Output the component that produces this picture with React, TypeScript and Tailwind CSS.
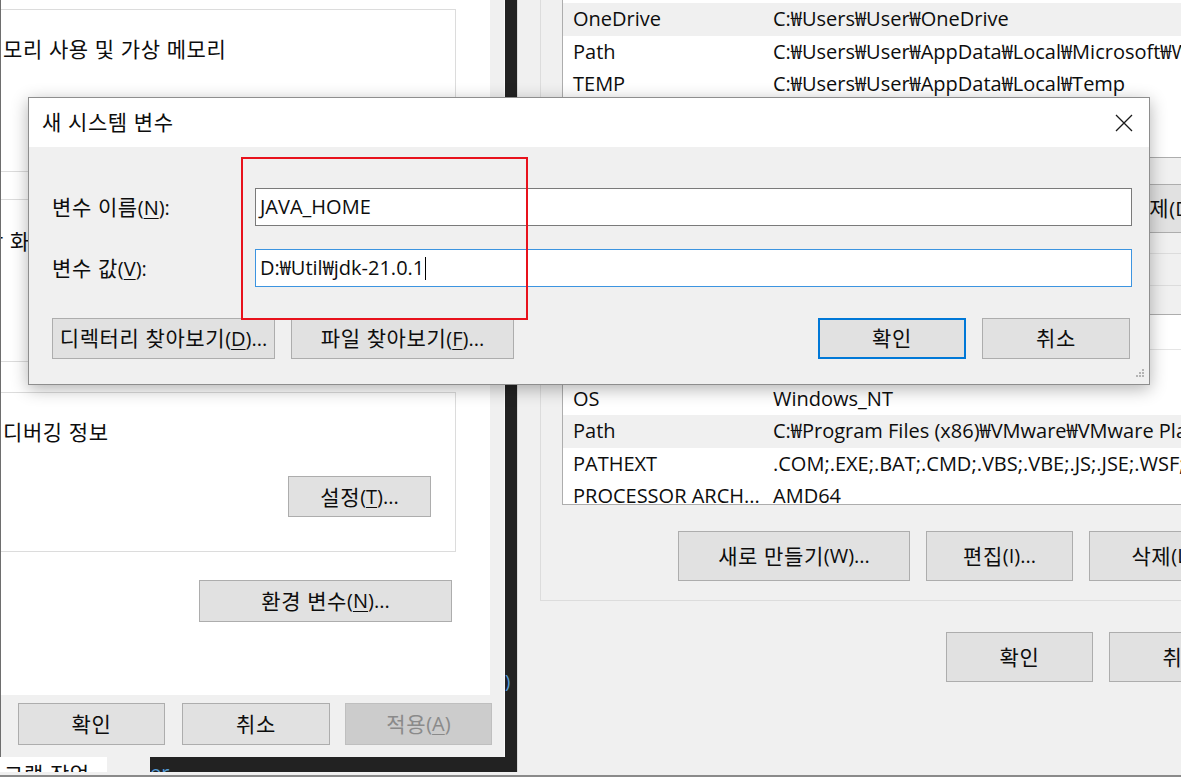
import type { ReactNode } from 'react'

// Korean runs: Noto CJK hangul at this size and tracking matches the advance of the screenshot's glyphs
const K = ({ children }: { children: ReactNode }) => (
  <span className="text-[21px] tracking-[0.6px]">{children}</span>
)

const U = ({ children }: { children: ReactNode }) => (
  <u className="underline decoration-1 underline-offset-[3px]">{children}</u>
)

type BtnProps = {
  className?: string
  children: ReactNode
  primary?: boolean
  disabled?: boolean
}

function Btn({ className = '', children, primary = false, disabled = false }: BtnProps) {
  const tone = primary
    ? 'border-2 border-[#0078d7] bg-[#e1e1e1]'
    : disabled
      ? 'border border-[#bfbfbf] bg-[#cccccc] text-[#8a8a8a]'
      : 'border border-[#adadad] bg-[#e1e1e1]'
  return (
    <div className={`flex shrink-0 items-center justify-center whitespace-nowrap ${tone} ${className}`}>
      {children}
    </div>
  )
}

type Row = { name: string; value: string; hot?: boolean }

const USER_VARS: Row[] = [
  { name: 'OneDrive', value: 'C:₩Users₩User₩OneDrive', hot: true },
  { name: 'Path', value: 'C:₩Users₩User₩AppData₩Local₩Microsoft₩WindowsApps;' },
  { name: 'TEMP', value: 'C:₩Users₩User₩AppData₩Local₩Temp' },
  { name: 'TMP', value: 'C:₩Users₩User₩AppData₩Local₩Temp' },
]

const SYSTEM_VARS: Row[] = [
  { name: 'NUMBER_OF_PROCESSORS', value: '8' },
  { name: 'OS', value: 'Windows_NT' },
  { name: 'Path', value: 'C:₩Program Files (x86)₩VMware₩VMware Player₩bin₩;', hot: true },
  { name: 'PATHEXT', value: '.COM;.EXE;.BAT;.CMD;.VBS;.VBE;.JS;.JSE;.WSF;...' },
  { name: 'PROCESSOR ARCH...', value: 'AMD64' },
]

function VarRow({ row }: { row: Row }) {
  return (
    <div className={`flex h-[32.5px] shrink-0 items-center whitespace-nowrap ${row.hot ? 'bg-[#f0f0f0]' : ''}`}>
      <div className="w-[210px] shrink-0 pl-[10px]">{row.name}</div>
      <div>{row.value}</div>
    </div>
  )
}

function Grip() {
  return (
    <svg width="12" height="12" viewBox="0 0 12 12" className="absolute bottom-[4px] right-[4px]">
      {[
        [9, 1],
        [6, 4],
        [9, 4],
        [3, 7],
        [6, 7],
        [9, 7],
      ].map(([x, y]) => (
        <rect key={`${x}-${y}`} x={x} y={y} width="2" height="2" fill="#b4b4b4" />
      ))}
    </svg>
  )
}

function NewVariableDialog() {
  return (
    <div className="absolute left-[28px] top-[97px] flex h-[288px] w-[1122px] flex-col border border-[#8e8e8e] bg-[#f0f0f0] shadow-[0_4px_16px_rgba(0,0,0,0.3)]">
      <div className="flex h-[49px] shrink-0 items-center justify-between bg-white pl-[13px] pr-[16px]">
        <K>새 시스템 변수</K>
        <svg width="18" height="18" viewBox="0 0 18 18">
          <path d="M1 1 L17 17 M17 1 L1 17" stroke="#1a1a1a" strokeWidth="1.3" />
        </svg>
      </div>
      <div className="relative flex flex-1 flex-col pl-[23px] pr-[17px] pt-[41px]">
        <div className="flex h-[38px] items-center">
          <div className="w-[203px] shrink-0">
            <K>변수 이름</K>(<U>N</U>):
          </div>
          <div className="flex h-full flex-1 items-center border border-[#7a7a7a] bg-white pl-[4px]">JAVA_HOME</div>
        </div>
        <div className="mt-[23px] flex h-[38px] items-center">
          <div className="w-[203px] shrink-0">
            <K>변수 값</K>(<U>V</U>):
          </div>
          <div className="flex h-full flex-1 items-center border border-[#3c94e0] bg-white pl-[4px]">
            D:₩Util₩jdk-21.0.1
            <span className="ml-[1px] h-[23px] w-px bg-black" />
          </div>
        </div>
        <div className="mt-[31px] flex h-[41px] pr-[2px]">
          <Btn className="w-[223px]">
            <K>디렉터리 찾아보기</K>(<U>D</U>)...
          </Btn>
          <Btn className="ml-[16px] w-[223px]">
            <K>파일 찾아보기</K>(<U>F</U>)...
          </Btn>
          <Btn primary className="ml-auto w-[148px]">
            <K>확인</K>
          </Btn>
          <Btn className="ml-[16px] w-[148px]">
            <K>취소</K>
          </Btn>
        </div>
        <Grip />
      </div>
    </div>
  )
}

function SystemPropertiesWindow() {
  return (
    <div className="flex w-[505px] shrink-0 flex-col">
      <div className="flex h-[757px] shrink-0 flex-col border-l border-r border-l-[#6e6e6e] border-r-[#fafafa] bg-[#f0f0f0]">
        <div className="flex h-[695px] w-[489px] shrink-0 flex-col overflow-hidden bg-white">
          <div className="-ml-[10px] mt-[9px] h-[163px] w-[465px] shrink-0 border border-[#dcdcdc] pl-[11px] pt-[27px] leading-[24px] whitespace-nowrap">
            <K>모리 사용 및 가상 메모리</K>
          </div>
          <div className="-ml-[10px] mt-[27px] h-[163px] w-[465px] shrink-0 border border-[#dcdcdc] pt-[29px] leading-[24px] whitespace-nowrap">
            <div className="-ml-[8px]">
              <K>탕 화면 설정</K>
            </div>
          </div>
          <div className="-ml-[10px] mt-[30px] flex h-[160px] w-[465px] shrink-0 flex-col border border-[#dcdcdc] pl-[11px] pt-[27px] leading-[24px] whitespace-nowrap">
            <K>디버깅 정보</K>
            <Btn className="ml-auto mr-[24px] mt-[32px] h-[41px] w-[143px]">
              <K>설정</K>(<U>T</U>)...
            </Btn>
          </div>
          <Btn className="ml-[198px] mt-[28px] h-[42px] w-[253px]">
            <K>환경 변수</K>(<U>N</U>)...
          </Btn>
        </div>
        <div className="mt-[8px] flex h-[42px] pl-[17px]">
          <Btn className="w-[147px]">
            <K>확인</K>
          </Btn>
          <Btn className="ml-[17px] w-[148px]">
            <K>취소</K>
          </Btn>
          <Btn disabled className="ml-[15px] w-[147px]">
            <K>적용</K>(<U>A</U>)
          </Btn>
        </div>
      </div>
      <div className="flex h-[15px] shrink-0 overflow-hidden">
        <div className="w-[107px] shrink-0 overflow-hidden whitespace-nowrap bg-white pl-[4px] pt-[7px]">
          <K>그램 작업</K>
        </div>
        <div className="w-[43px] shrink-0 bg-[#f0f0f0]" />
        <div className="flex-1 overflow-hidden pt-[6px] text-[#569cd6]">er</div>
      </div>
    </div>
  )
}

function EnvironmentWindow() {
  return (
    <div className="flex h-[772px] flex-1 flex-col overflow-hidden border-l border-[#dadada] bg-[#f0f0f0]">
      <div className="ml-[22px] flex h-[254px] w-[700px] shrink-0 flex-col border-b border-l border-[#dcdcdc]">
        <div className="ml-[21px] flex h-[158px] w-[700px] shrink-0 flex-col overflow-hidden border-b border-l border-[#adadad] bg-white pt-[3px]">
          {USER_VARS.map((row) => (
            <VarRow key={row.name} row={row} />
          ))}
        </div>
        <div className="mt-[26px] flex h-[49px] shrink-0 pl-[137px]">
          <Btn className="w-[232px]">
            <K>새로 만들기</K>(N)...
          </Btn>
          <Btn className="ml-[16px] w-[147px]">
            <K>편집</K>(E)...
          </Btn>
          <Btn className="ml-[16px] w-[147px]">
            <K>삭제</K>(D)
          </Btn>
        </div>
      </div>
      <div className="ml-[22px] mt-[31px] flex h-[316px] w-[700px] shrink-0 flex-col border-b border-l border-t border-[#dcdcdc]">
        <div className="ml-[21px] mt-[28px] flex h-[191px] w-[700px] shrink-0 flex-col overflow-hidden border-b border-l border-t border-[#adadad] bg-white">
          <div className="flex h-[35px] shrink-0 items-center border-b border-[#e5e5e5]">
            <div className="w-[210px] shrink-0 pl-[10px]">
              <K>변수</K>
            </div>
            <K>값</K>
          </div>
          {SYSTEM_VARS.map((row) => (
            <VarRow key={row.name + row.value} row={row} />
          ))}
        </div>
        <div className="mt-[26px] flex h-[50px] shrink-0 pl-[137px]">
          <Btn className="w-[232px]">
            <K>새로 만들기</K>(W)...
          </Btn>
          <Btn className="ml-[16px] w-[147px]">
            <K>편집</K>(I)...
          </Btn>
          <Btn className="ml-[16px] w-[147px]">
            <K>삭제</K>(L)
          </Btn>
        </div>
      </div>
      <div className="mt-[31px] flex h-[50px] shrink-0 pl-[428px]">
        <Btn className="w-[147px]">
          <K>확인</K>
        </Btn>
        <Btn className="ml-[16px] w-[147px]">
          <K>취소</K>
        </Btn>
      </div>
    </div>
  )
}

export default function App() {
  return (
    <div className="relative flex h-[777px] w-[1181px] flex-col overflow-hidden bg-[#222222] font-['Open_Sans','Noto_Sans_CJK_KR',sans-serif] text-[20px] leading-none text-[#0d0d0d]">
      <div className="flex h-[772px] shrink-0">
        <SystemPropertiesWindow />
        <div className="w-[12px] shrink-0 pt-[672px] text-[18px] text-[#569cd6]">)</div>
        <EnvironmentWindow />
      </div>
      <div className="h-[5px] shrink-0 border-b-2 border-[#8a8a8a] bg-[#f0f0f0]" />

      <NewVariableDialog />
      <div className="absolute left-[241px] top-[157px] h-[163px] w-[287px] border-2 border-[#e8121c]" />
    </div>
  )
}
